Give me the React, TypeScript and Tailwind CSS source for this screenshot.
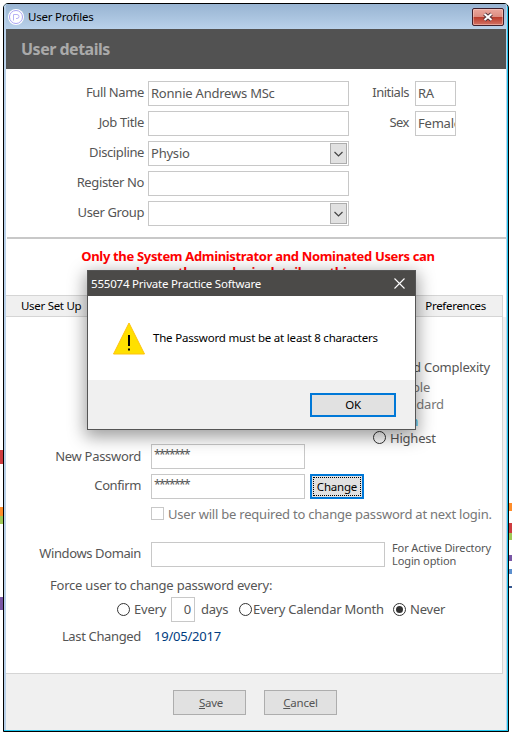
import type { ReactNode } from 'react';

function Label({ children, className = '' }: { children: ReactNode; className?: string }) {
  return <span className={`whitespace-nowrap ${className}`}>{children}</span>;
}

function Field({ children, className = '' }: { children?: ReactNode; className?: string }) {
  return (
    <div className={`flex h-[25px] shrink-0 items-center overflow-hidden whitespace-nowrap border border-[#c8c8c8] bg-white pl-[2px] ${className}`}>
      {children}
    </div>
  );
}

function Arrow() {
  return (
    <span className="mr-px ml-auto flex h-[21px] w-[17px] items-center justify-center border border-[#adadad] bg-[#e1e1e1]">
      <svg width="9" height="6" viewBox="0 0 9 6" fill="none" stroke="#444" strokeWidth="1.2">
        <path d="M.5 1 4.5 5l4-4" />
      </svg>
    </span>
  );
}

function Radio({ checked = false }: { checked?: boolean }) {
  return (
    <span className="flex size-[13px] shrink-0 items-center justify-center rounded-full border border-[#333] bg-white">
      {checked && <span className="size-[7px] rounded-full bg-[#333]" />}
    </span>
  );
}

const rows = [
  { label: 'Full Name', value: 'Ronnie Andrews MSc', select: false, side: 'Initials', sideValue: 'RA' },
  { label: 'Job Title', value: '', select: false, side: 'Sex', sideValue: 'Female' },
  { label: 'Discipline', value: 'Physio', select: true },
  { label: 'Register No', value: '', select: false },
  { label: 'User Group', value: '', select: true },
];

function Details() {
  return (
    <div className="flex h-[168px] flex-col gap-[5px] pt-3">
      {rows.map((r) => (
        <div key={r.label} className="flex h-[25px] items-center">
          <Label className="mr-[4px] w-[138px] pb-[3px] text-right tracking-[-0.38px]">{r.label}</Label>
          <Field className="w-[201px]">
            <span className="pb-[2px]">{r.value}</span>
            {r.select && <Arrow />}
          </Field>
          {r.side && (
            <>
              <Label className="mr-[6px] w-[60px] pb-[3px] text-right tracking-[-0.5px]">{r.side}</Label>
              <Field className="w-[41px]">
                <span className="pb-[2px]">{r.sideValue}</span>
              </Field>
            </>
          )}
        </div>
      ))}
    </div>
  );
}

function PasswordPanel() {
  return (
    <div className="flex h-[357px] w-[497px] flex-col border-r border-b border-[#d5d5d5] bg-white">
      <div className="h-[127px] pt-[40px] pl-[367px]">
        <Label className="flex h-[21px] w-[117px] justify-end leading-[20px]">Password Complexity</Label>
        {['Simple', 'Standard', 'High', 'Highest'].map((t) => (
          <div key={t} className="flex h-[17px] items-center gap-1">
            <Radio />
            <Label className={t === 'High' ? 'text-[#35b4e8]' : t === 'Highest' ? '' : 'text-[#777]'}>{t}</Label>
          </div>
        ))}
      </div>
      <div className="flex h-[30px] items-start">
        <Label className="mr-[10px] w-[135px] pt-[3px] text-right tracking-[-0.3px]">New Password</Label>
        <Field className="w-[154px]"><span className="pb-[3px] text-[12px] tracking-[-1.6px]">*******</span></Field>
      </div>
      <div className="flex h-[33px] items-start">
        <Label className="mr-[10px] w-[135px] pt-[2px] text-right tracking-[-0.4px]">Confirm</Label>
        <Field className="w-[154px]"><span className="pb-[3px] text-[12px] tracking-[-1.6px]">*******</span></Field>
        <button className="ml-[5px] h-[25px] w-[54px] border-2 border-[#0078d7] bg-[#e1e1e1] p-px text-[11.5px] tracking-[-0.2px] text-black">
          <span className="flex h-full items-center justify-center border border-dotted border-black">Change</span>
        </button>
      </div>
      <div className="flex h-[35px] items-start pl-[145px] text-[#777]">
        <span className="mr-[4px] size-[13px] shrink-0 border border-[#c8c8c8]" />
        <Label className="-mt-[2px]">User will be required to change password at next login.</Label>
      </div>
      <div className="flex h-[35px] items-start">
        <Label className="mr-[10px] w-[135px] pt-[2px] text-right tracking-[-0.38px]">Windows Domain</Label>
        <Field className="w-[234px]" />
        <span className="-mt-px ml-[7px] whitespace-nowrap text-[11px] leading-[13px] tracking-[-0.1px]">For Active Directory<br />Login option</span>
      </div>
      <Label className="-mt-px h-[21px] pl-[44px]">Force user to change password every:</Label>
      <div className="flex h-[25px] items-center pl-[111px]">
        <Radio />
        <Label className="ml-1 w-[37px] pb-px">Every</Label>
        <Field className="w-[24px] justify-end pr-[3px]"><span className="pb-px">0</span></Field>
        <Label className="ml-[6px] w-[38px] pb-px">days</Label>
        <Radio />
        <Label className="ml-px w-[140px] pb-px">Every Calendar Month</Label>
        <Radio checked />
        <Label className="ml-1 pb-px">Never</Label>
      </div>
      <div className="flex pt-[5px]">
        <Label className="mr-[13px] w-[135px] text-right tracking-[-0.35px]">Last Changed</Label>
        <Label className="text-[#003c80]">19/05/2017</Label>
      </div>
    </div>
  );
}

function MessageBox() {
  return (
    <div className="absolute top-[270px] left-[87px] flex h-[160px] w-[329px] flex-col border border-[#555] bg-white text-[11.5px] tracking-[-0.2px] text-black shadow-[0_5px_16px_2px_rgba(0,0,0,0.38)]">
      <div className="flex h-[25px] shrink-0 items-center justify-between bg-[#4b4a48] pr-[10px] pl-[3px] text-white">
        <span>555074 Private Practice Software</span>
        <svg width="11" height="11" viewBox="0 0 11 11" stroke="white" strokeWidth="1.1"><path d="m.5.5 10 10m0-10-10 10" /></svg>
      </div>
      <div className="flex h-[84px] shrink-0 items-center pl-[25px]">
        <svg width="32" height="33" viewBox="0 0 32 33" className="mr-[8px]">
          <path d="M16 1 31.5 32H.5Z" fill="#ffe000" stroke="#ffc20e" />
          <path d="M16 13v11m0 2.5v2" stroke="#000" strokeWidth="2" />
        </svg>
        <span>The Password must be at least 8 characters</span>
      </div>
      <div className="flex flex-1 justify-end bg-[#f0f0f0] pt-[13px] pr-[19px]">
        <button className="h-[24px] w-[86px] border-2 border-[#0078d7] bg-[#e1e1e1]">OK</button>
      </div>
    </div>
  );
}

export default function App() {
  return (
    <div className="relative h-[735px] w-[512px] overflow-hidden bg-white pt-[3px] pl-[3px] font-['Noto_Sans','Open_Sans',sans-serif] text-[13px] leading-[18px] tracking-[-0.22px] text-[#555]">
      <div className="absolute top-[450px] left-0 h-[14px] w-[3px] bg-[#ce3c40]" />
      <div className="absolute top-[507px] left-0 h-[9px] w-[3px] bg-[#ff8d2a]" />
      <div className="absolute top-[516px] left-0 h-[8px] w-[3px] bg-[#a0c957]" />
      <div className="absolute top-[597px] left-0 h-[13px] w-[3px] bg-[#7956a5]" />
      <div className="absolute top-[503px] left-[509px] h-[8px] w-[3px] bg-[#ff8d2a]" />
      <div className="absolute top-[523px] left-[509px] h-[10px] w-[3px] bg-[#ce3c40]" />
      <div className="absolute top-[533px] left-[509px] h-[7px] w-[3px] bg-[#a0c957]" />
      <div className="absolute top-[555px] left-[509px] h-[6px] w-[3px] bg-[#7956a5]" />
      <div className="absolute top-[569px] left-[509px] h-[5px] w-[3px] bg-[#5b8fce]" />
      <div className="absolute top-[586px] left-[509px] h-[2px] w-[3px] bg-[#36578f]" />
      <div className="h-[729px] w-[506px] overflow-hidden rounded-t-[5px] border border-black bg-[#22c8f0]">
        <div className="mr-px flex h-[726px] flex-col border-r border-l-2 border-[#b9d1ea] bg-white">
          <div className="flex h-[25px] shrink-0 items-center bg-gradient-to-b from-[#98b4d2] to-[#b9d1ea] pl-[2px] text-[11.5px] text-black">
            <svg width="16" height="16" viewBox="0 0 16 16" fill="none">
              <circle cx="8" cy="8" r="8" fill="white" />
              <circle cx="8" cy="8" r="6.5" stroke="#aaa4f2" />
              <path d="M5.5 11.5v-6H9q2 0 2 2t-2 2H8" stroke="#b8b2f5" />
            </svg>
            <span className="ml-1">User Profiles</span>
            <button className="mt-px mr-[2px] ml-auto flex h-[18px] w-[32px] items-center justify-center rounded-[2px] border border-[#40202c] bg-[linear-gradient(#eba79d_0%,#dc8d82_48%,#b93a2a_50%,#d27265_100%)] shadow-[inset_0_0_0_1px_rgba(255,220,210,0.45)]">
              <svg width="12" height="10" viewBox="0 0 12 10"><path d="m2.5 2 7 6m0-6-7 6" stroke="#53343c" strokeWidth="4" /><path d="m2.5 2 7 6m0-6-7 6" stroke="white" strokeWidth="2" /></svg>
            </button>
          </div>
          <div className="flex h-[40px] shrink-0 items-center bg-[#525252] pl-[15px] text-[16px] font-bold tracking-[-0.5px] text-[#aaa]">User details</div>
          <Details />
          <div className="ml-px h-[2px] shrink-0 bg-[#c8c8c8]" />
          <div className="h-[56px] shrink-0 pt-[9px] pl-[4px] text-center text-[13px] leading-[16px] font-bold tracking-[-0.33px] text-[#f00]">
            <div>Only the System Administrator and Nominated Users can</div>
            <div>change the user login details on this page</div>
          </div>
          <div className="mr-[3px] flex h-[22px] shrink-0 items-center justify-between border-t border-r border-b border-[#d5d5d5] bg-[#f0f0f0] pr-[16px] pl-[15px] text-[11.5px] tracking-[-0.3px] text-black">
            <span>User Set Up</span><span>Preferences</span>
          </div>
          <div className="flex-1 bg-[#f0f0f0]">
            <PasswordPanel />
            <div className="flex gap-[18px] pt-[16px] pl-[167px] text-[11.5px]">
              <button className="h-[25px] w-[73px] border border-[#adadad] bg-[#e1e1e1] pl-[3px]"><u>S</u>ave</button>
              <button className="h-[25px] w-[73px] border border-[#adadad] bg-[#e1e1e1]"><u>C</u>ancel</button>
            </div>
          </div>
        </div>
      </div>
      <MessageBox />
    </div>
  );
}
